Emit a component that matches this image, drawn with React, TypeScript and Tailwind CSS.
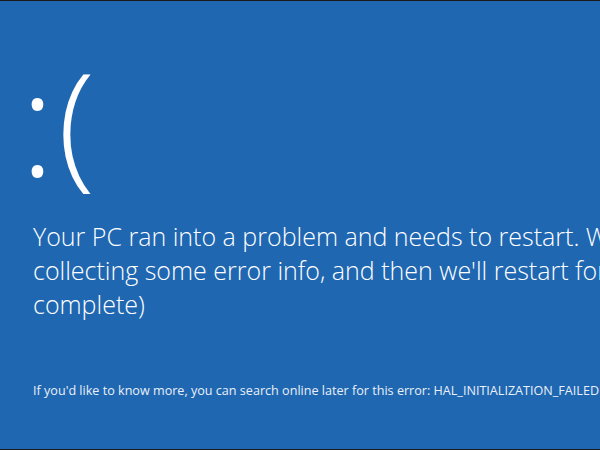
export default function App() {
  return (
    <div className="w-[600px] h-[450px] overflow-hidden bg-[#2067b2] border-t border-b border-[#1a1a1a] text-white font-['Open_Sans',sans-serif]">
      <div className="pl-[33px] whitespace-nowrap">
        {/* sad face */}
        <div className="mt-[44px] h-[150px] flex items-start leading-[150px]">
          <span className="text-[146px] font-light ml-[-13px] mt-[1px]">:</span>
          <span className="text-[137px] font-light ml-[3px] mt-[-1px]">(</span>
        </div>

        {/* message */}
        <div className="mt-[24px] text-[25px] font-light leading-[34px]">
          <p>Your PC ran into a problem and needs to restart. We're just</p>
          <p>collecting some error info, and then we'll restart for you. (0%</p>
          <p>complete)</p>
        </div>

        {/* stop code */}
        <p className="mt-[62px] text-[12.6px] leading-[16px] opacity-90">
          If you'd like to know more, you can search online later for this error: HAL_INITIALIZATION_FAILED
        </p>
      </div>
    </div>
  );
}
